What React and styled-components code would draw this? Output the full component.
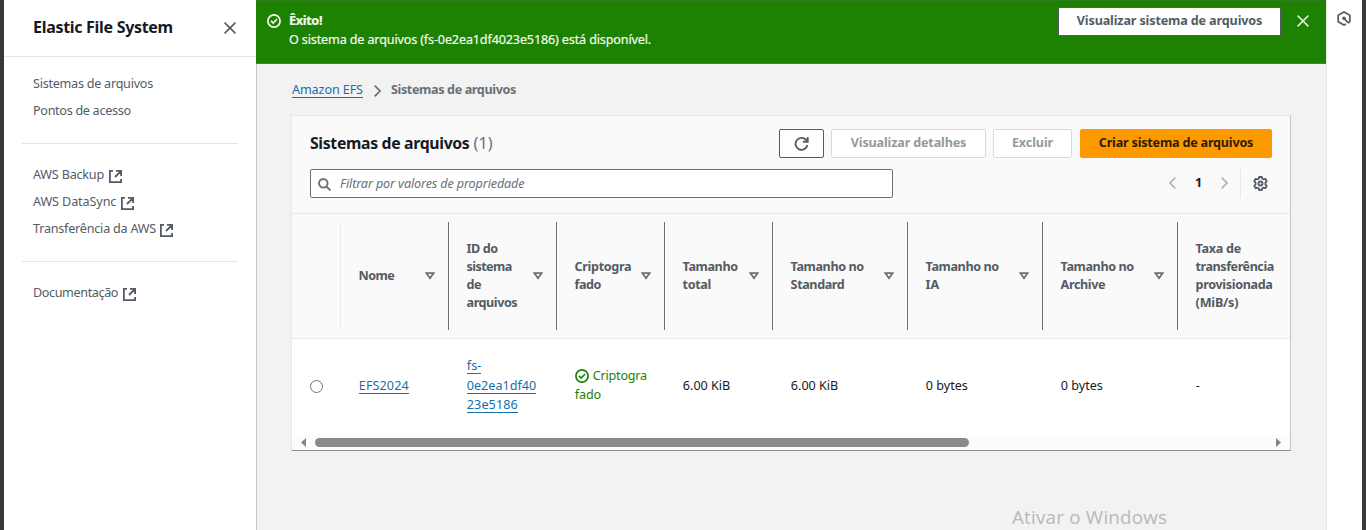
import React from "react";
import styled, { createGlobalStyle, css } from "styled-components";

const GlobalStyle = createGlobalStyle`
  *, *::before, *::after { box-sizing: border-box; }
  body {
    margin: 0;
    overflow: hidden;
    font-family: "Noto Sans", "Open Sans", sans-serif;
    font-size: 12.6px;
    line-height: 20px;
    color: #16191f;
  }
  svg { display: block; flex: none; }
  ul { list-style: none; margin: 0; padding: 0; }
`;

/* Inline text with its own tracking */
const T = styled.span`
  letter-spacing: ${(p) => p.$ls || 0}px;
  white-space: nowrap;
`;

const Page = styled.div`
  display: flex;
  height: 530px;
  border-left: 4px solid #3a3836;
  border-right: 4px solid #3a3a3a;
  background: #f2f2f2;
`;

const Sidebar = styled.nav`
  width: 252px;
  flex: none;
  background: #fff;
`;

const SidebarHeader = styled.header`
  display: flex;
  align-items: center;
  justify-content: space-between;
  height: 57px;
  padding: 0 20px 1px 29px;
  border-bottom: 1px solid #e6e8e8;
  font-size: 16px;
  font-weight: 700;
`;

const SidebarTitle = styled(T)`
  padding-bottom: 2px;
`;

const NavList = styled.ul`
  margin: 0 18px;
  padding: ${(p) => p.$pad || "17px 0 19px"};
  border-bottom: ${(p) => (p.$last ? "none" : "1px solid #e4e6e6")};
`;

const NavItem = styled.li`
  display: flex;
  align-items: center;
  gap: 4.5px;
  height: 27px;
  padding-left: 11px;
  color: #545b64;
  svg { margin-top: 3px; }
`;

const Main = styled.main`
  flex: 1;
  min-width: 0;
`;

const Flash = styled.section`
  display: flex;
  align-items: flex-start;
  height: 64px;
  padding: 6px 17px 0 11px;
  background: #1d8102;
  border-top: 1px solid #2f7d1c;
  border-bottom: 1px solid #43833a;
  color: #f3fbef;
  > svg { margin-top: 7px; }
  > svg:last-child { margin-top: 8px; }
`;

const FlashText = styled.div`
  flex: 1;
  padding: 4px 0 0 8px;
  line-height: 19px;
  -webkit-text-stroke: 0.2px #f3fbef;
`;

const FlashTitle = styled.div`
  font-weight: 700;
`;

const Button = styled.button`
  display: flex;
  align-items: center;
  justify-content: center;
  width: ${(p) => p.$w}px;
  height: 29px;
  padding: 0 0 2px;
  font: inherit;
  font-weight: 700;
  color: #545b64;
  background: #fff;
  border: 1px solid #545b64;
  border-radius: 2px;
  svg { margin-top: 2px; }
  ${(p) =>
    p.$kind === "disabled" &&
    css`
      color: #929b9c;
      border-color: #d5dbdb;
    `}
  ${(p) =>
    p.$kind === "primary" &&
    css`
      margin-left: 1px;
      color: #2b1d08;
      background: #ff9900;
      border-color: #ff9900;
    `}
`;

const FlashButton = styled(Button)`
  margin-right: 16px;
  -webkit-text-stroke: 0;
  border-radius: 0;
`;

const Content = styled.div`
  height: 466px;
  padding: 16px 35px 0 34px;
  border-left: 1px solid #c9cccc;
`;

const Breadcrumbs = styled.div`
  display: flex;
  align-items: center;
  height: 20px;
  padding-left: 1px;
  color: #687078;
  font-weight: 700;
  svg { margin: 2px 10px 0 11px; }
`;

const Link = styled.a`
  color: #1570a8;
  font-weight: 400;
  text-decoration: none;
  border-bottom: 1px solid #1570a8;
  line-height: 14px;
  display: inline-block;
`;

const Card = styled.section`
  width: 1000px;
  height: 336px;
  margin-top: 15px;
  background: #fff;
  border: 1px solid #e6e8e8;
  border-right-color: #c3c7c7;
  border-bottom-color: #8b9192;
`;

const CardHeader = styled.div`
  height: 98px;
  padding: 13px 18px 0 18px;
  background: #fafafa;
  border-bottom: 1px solid #e8eaea;
`;

const TitleRow = styled.div`
  display: flex;
  align-items: center;
  gap: 7px;
  height: 29px;
`;

const Title = styled.h2`
  flex: 1;
  margin: 0 0 2px;
  font-size: 15.8px;
  line-height: 24px;
  font-weight: 700;
  white-space: nowrap;
`;

const Count = styled.span`
  color: #687078;
  font-weight: 400;
  font-size: 16.2px;
`;

const FilterRow = styled.div`
  display: flex;
  align-items: center;
  margin-top: 11px;
`;

const Search = styled.div`
  display: flex;
  align-items: center;
  gap: 9px;
  width: 583px;
  height: 29px;
  padding: 0 7px 0 7px;
  background: #fff;
  border: 1px solid #687078;
  border-radius: 2px;
  color: #687078;
  font-style: italic;
  svg { margin-top: 1px; }
`;

const Pager = styled.div`
  display: flex;
  align-items: center;
  justify-content: space-between;
  width: 59px;
  margin-left: auto;
  padding-bottom: 1px;
  font-weight: 700;
`;

const Settings = styled.div`
  display: flex;
  align-items: center;
  height: 29px;
  margin-left: 12px;
  padding: 0 4px 0 12px;
  border-left: 1px solid #e8eaea;
`;

const columns = css`
  display: grid;
  grid-template-columns: 49px repeat(4, 108px) repeat(3, 135px) 112px;
`;

const TableHead = styled.div`
  ${columns}
  height: 125px;
  padding: 8px 0;
  background: #fafafa;
  border-bottom: 1px solid #e8eaea;
  overflow: hidden;
`;

const HeadCell = styled.div`
  display: flex;
  align-items: center;
  justify-content: space-between;
  padding: 0 13px 0 17.6px;
  border-right: 1px solid ${(p) => p.$line || "#687078"};
  color: #545b64;
  font-weight: 700;
  line-height: 18px;
  white-space: nowrap;
`;

const TableRow = styled.div`
  ${columns}
  height: 95px;
  padding-bottom: 2px;
  align-items: center;
`;

const Cell = styled.div`
  padding-left: 17.8px;
  line-height: 19.4px;
  white-space: nowrap;
`;

const Status = styled.div`
  color: #1d8102;
  line-height: 19px;
  padding-bottom: 1px;
  svg { display: inline-block; vertical-align: -3px; margin-right: 4px; }
`;

const Radio = styled.span`
  display: block;
  width: 13px;
  height: 13px;
  margin-top: 2px;
  border: 1px solid #6f7476;
  border-radius: 50%;
  background: #fff;
`;

const ScrollBar = styled.div`
  display: flex;
  align-items: center;
  justify-content: space-between;
  height: 16px;
  padding: 0 9px;
  background: #fcfcfc;
`;

const ScrollTrack = styled.div`
  flex: 1;
  padding: 0 7px 0 9px;
`;

const ScrollThumb = styled.div`
  width: 654px;
  height: 9px;
  border-radius: 5px;
  background: #8b8b8b;
`;

const ToolsPanel = styled.aside`
  width: 36px;
  flex: none;
  padding: 11px 0 0 10px;
  background: #fff;
  border-left: 1px solid #e3e4e4;
`;

const Watermark = styled.div`
  position: absolute;
  left: 1012px;
  top: 504px;
  font-family: "Open Sans", "Noto Sans", sans-serif;
  font-size: 18.8px;
  letter-spacing: 0.22px;
  line-height: 26px;
  color: #b9b9b9;
  white-space: nowrap;
`;

const CloseIcon = ({ color }) => (
  <svg width="12" height="12" viewBox="0 0 12 12" fill="none" stroke={color} strokeWidth="1.6">
    <path d="M.6.6 11.4 11.4M11.4.6.6 11.4" />
  </svg>
);

const ExternalIcon = () => (
  <svg width="13" height="13" viewBox="0 0 13 13" fill="none" stroke="#545b64" strokeWidth="1.8">
    <path d="M4 .9H.9v11.2h11.2V9M7 .9h5.1V6M11.7 1.300 6 7" />
  </svg>
);

const CheckIcon = ({ color }) => (
  <svg width="14" height="14" viewBox="0 0 14 14" fill="none" stroke={color} strokeWidth="1.7">
    <circle cx="7" cy="7" r="6.1" />
    <path d="m4 6.900 2.200 2.200L10.100 5" />
  </svg>
);

const Chevron = ({ w = 7, h = 12, color, left }) => (
  <svg width={w} height={h} viewBox="0 0 7 12" fill="none" stroke={color} strokeWidth="1.7">
    <path d={left ? "M6.3.7 1 6l5.3 5.3" : "M.7.7 6 6 .7 11.3"} />
  </svg>
);

const RefreshIcon = () => (
  <svg width="15" height="15" viewBox="0 0 16 16" fill="none" stroke="#545b64" strokeWidth="2">
    <path d="M14.300 9.600A6.400 6.400 0 1 1 12.900 4.200L14.600 6" />
    <path d="M14.600 1V6.100H9.600" />
  </svg>
);

const SearchIcon = () => (
  <svg width="13" height="13" viewBox="0 0 13 13" fill="none" stroke="#687078" strokeWidth="1.9">
    <circle cx="5.300" cy="5.300" r="4.300" />
    <path d="m8.300 8.300 4.200 4.200" />
  </svg>
);

const GearIcon = () => (
  <svg width="15" height="15" viewBox="0.200 0 13.600 14" fill="none" stroke="#545b64" strokeWidth="1.7" strokeLinejoin="round">
    <path d="M5.700.9h2.600l.4 1.600 1.100.6 1.700-.5 1.300 2.200-1.200 1.300v1.800l1.200 1.300-1.300 2.200-1.700-.5-1.100.6-.4 1.600H5.700l-.4-1.600-1.100-.6-1.700.5-1.300-2.200 1.200-1.300V6.100L1.200 4.800l1.300-2.200 1.700.5 1.100-.6z" />
    <circle cx="7" cy="7" r="1.900" />
  </svg>
);

const SortIcon = () => (
  <svg width="10" height="8" viewBox="0 0 10 8" fill="none" stroke="#687078" strokeWidth="1.8">
    <path d="M1.500 1.200h7L5 6.200z" />
  </svg>
);

const HexIcon = () => (
  <svg width="14" height="15" viewBox="0 0 14 15" fill="none" stroke="#545b64" strokeWidth="1.700">
    <path d="M9 13 7 14 1.200 10.800V4.200L7 1l5.800 3.200v6.600l-1.600.9L7.500 8" />
    <circle cx="7" cy="7.300" r="1.800" fill="#545b64" stroke="none" />
  </svg>
);

const ScrollArrow = ({ left }) => (
  <svg width="5" height="9" viewBox="0 0 5 9" fill="#858585">
    <path d={left ? "M5 0v9L0 4.500z" : "M0 0v9l5-4.500z"} />
  </svg>
);

const HEADERS = [
  [["Nome", -0.6]],
  [["ID do", -0.4], ["sistema", -0.6], ["de", -0.5], ["arquivos", -0.45]],
  [["Criptogra", -0.35], ["fado", -0.5]],
  [["Tamanho", -0.4], ["total", -0.35]],
  [["Tamanho no", -0.4], ["Standard", -0.4]],
  [["Tamanho no", -0.4], ["IA", 0]],
  [["Tamanho no", -0.4], ["Archive", -0.4]],
];

const LAST_HEADER = [
  ["Taxa de", -0.3],
  ["transferência", -0.46],
  ["provisionada", -0.35],
  ["(MiB/s)", -0.2],
];

const Lines = ({ items }) => (
  <div>
    {items.map(([text, ls]) => (
      <div key={text}>
        <T $ls={ls}>{text}</T>
      </div>
    ))}
  </div>
);

export default function App() {
  return (
    <>
      <GlobalStyle />
      <Page>
        <Sidebar>
          <SidebarHeader>
            <SidebarTitle $ls={-0.3}>Elastic File System</SidebarTitle>
            <CloseIcon color="#545b64" />
          </SidebarHeader>
          <NavList $pad="13px 0 19px">
            <NavItem><T $ls={-0.25}>Sistemas de arquivos</T></NavItem>
            <NavItem><T $ls={-0.3}>Pontos de acesso</T></NavItem>
          </NavList>
          <NavList $pad="17px 0 19px">
            <NavItem><T $ls={-0.2}>AWS Backup</T><ExternalIcon /></NavItem>
            <NavItem><T $ls={-0.1}>AWS DataSync</T><ExternalIcon /></NavItem>
            <NavItem><T $ls={-0.22}>Transferência da AWS</T><ExternalIcon /></NavItem>
          </NavList>
          <NavList $pad="17px 0 0" $last>
            <NavItem><T $ls={-0.38}>Documentação</T><ExternalIcon /></NavItem>
          </NavList>
        </Sidebar>

        <Main>
          <Flash>
            <CheckIcon color="#f3fbef" />
            <FlashText>
              <FlashTitle><T $ls={-0.3}>Êxito!</T></FlashTitle>
              <T $ls={-0.145}>O sistema de arquivos (fs-0e2ea1df4023e5186) está disponível.</T>
            </FlashText>
            <FlashButton $w={223}><T $ls={-0.14}>Visualizar sistema de arquivos</T></FlashButton>
            <CloseIcon color="#d9f0d0" />
          </Flash>

          <Content>
            <Breadcrumbs>
              <Link><T $ls={-0.1}>Amazon EFS</T></Link>
              <Chevron color="#687078" />
              <T $ls={-0.37}>Sistemas de arquivos</T>
            </Breadcrumbs>

            <Card>
              <CardHeader>
                <TitleRow>
                  <Title><T $ls={-0.33}>Sistemas de arquivos</T> <Count>(1)</Count></Title>
                  <Button $w={45} aria-label="Atualizar"><RefreshIcon /></Button>
                  <Button $w={155} $kind="disabled"><T $ls={-0.16}>Visualizar detalhes</T></Button>
                  <Button $w={79} $kind="disabled"><T $ls={-0.1}>Excluir</T></Button>
                  <Button $w={192} $kind="primary"><T $ls={-0.2}>Criar sistema de arquivos</T></Button>
                </TitleRow>
                <FilterRow>
                  <Search><SearchIcon /><T $ls={-0.12}>Filtrar por valores de propriedade</T></Search>
                  <Pager>
                    <Chevron color="#aab7b8" left />
                    <T>1</T>
                    <Chevron color="#aab7b8" />
                  </Pager>
                  <Settings><GearIcon /></Settings>
                </FilterRow>
              </CardHeader>

              <TableHead>
                <HeadCell $line="#eaeded" />
                {HEADERS.map((items, i) => (
                  <HeadCell key={i}>
                    <Lines items={items} />
                    <SortIcon />
                  </HeadCell>
                ))}
                <HeadCell $line="transparent">
                  <Lines items={LAST_HEADER} />
                </HeadCell>
              </TableHead>

              <TableRow>
                <Cell><Radio /></Cell>
                <Cell><Link><T $ls={0.1}>EFS2024</T></Link></Cell>
                <Cell>
                  <Link><T>fs-</T></Link><br />
                  <Link><T>0e2ea1df40</T></Link><br />
                  <Link><T $ls={0.1}>23e5186</T></Link>
                </Cell>
                <Cell>
                  <Status><CheckIcon color="#1d8102" /><T $ls={-0.22}>Criptogra</T><br /><T $ls={-0.15}>fado</T></Status>
                </Cell>
                <Cell><T>6.00 KiB</T></Cell>
                <Cell><T>6.00 KiB</T></Cell>
                <Cell><T>0 bytes</T></Cell>
                <Cell><T>0 bytes</T></Cell>
                <Cell>-</Cell>
              </TableRow>

              <ScrollBar>
                <ScrollArrow left />
                <ScrollTrack><ScrollThumb /></ScrollTrack>
                <ScrollArrow />
              </ScrollBar>
            </Card>
          </Content>
        </Main>

        <ToolsPanel><HexIcon /></ToolsPanel>
      </Page>
      <Watermark>Ativar o Windows</Watermark>
    </>
  );
}
